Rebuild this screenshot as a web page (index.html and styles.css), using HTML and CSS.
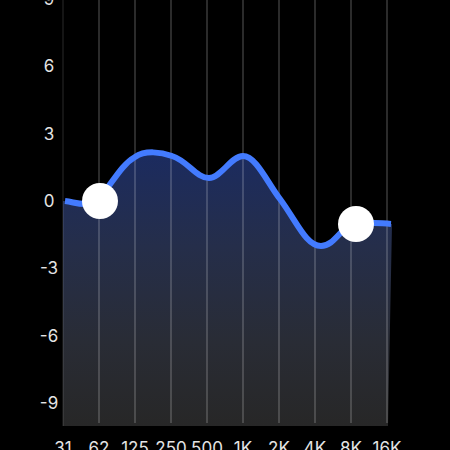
FILE: index.html
```html
<!DOCTYPE html>
<html lang="en">
<head>
    <meta charset="UTF-8">
    <meta name="viewport" content="width=device-width, initial-scale=1.0">
    <title>Equalizer</title>
    <link rel="stylesheet" href="styles.css">
</head>
<body>
    <main class="equalizer">
        <div class="chart">
            <!-- Gain in dB -->
            <div class="gain-axis">
                <span>9</span>
                <span>6</span>
                <span>3</span>
                <span>0</span>
                <span>-3</span>
                <span>-6</span>
                <span>-9</span>
            </div>
            <div class="plot">
                <svg class="curve" viewBox="0 0 324 450" preserveAspectRatio="none" aria-hidden="true">
                    <defs>
                        <linearGradient id="fill" gradientUnits="userSpaceOnUse" x1="0" y1="174" x2="0" y2="450">
                            <stop offset="0" stop-color="#1b2b60"/>
                            <stop offset="0.35" stop-color="#252e4a"/>
                            <stop offset="0.7" stop-color="#292c35"/>
                            <stop offset="1" stop-color="#272727"/>
                        </linearGradient>
                    </defs>
                    <path fill="url(#fill)" d="M0 225 L2 225 C10 226 14 228 22 228 C42 228 51 193 72 181 C82 174 98 176 109 180 C125 185 133 202 146 202 C158 202 168 180 180 180 C193 180 204 206 217 223 C234 246 243 270 258 270 C273 270 279 247 295 247 C307 246 313 247 329 248 L325 450 L0 450 Z"/>
                    <path class="grid-line edge" d="M0 0V450"/>
                    <path class="grid-line" d="M36 0V447 M72 0V447 M108 0V447 M144 0V447 M180 0V447 M216 0V447 M252 0V447 M288 0V447 M324 0V447"/>
                    <path class="response" d="M2 225 C10 226 14 228 22 228 C42 228 51 193 72 181 C82 174 98 176 109 180 C125 185 133 202 146 202 C158 202 168 180 180 180 C193 180 204 206 217 223 C234 246 243 270 258 270 C273 270 279 247 295 247 C307 246 313 247 328 248"/>
                </svg>
                <input class="knob low" type="range" min="-10" max="10" value="0" aria-label="Low band gain">
                <input class="knob high" type="range" min="-10" max="10" value="-1" aria-label="High band gain">
            </div>
        </div>
        <!-- Frequency in Hz -->
        <div class="frequency-axis">
            <span>31</span>
            <span>62</span>
            <span>125</span>
            <span>250</span>
            <span>500</span>
            <span>1K</span>
            <span>2K</span>
            <span>4K</span>
            <span>8K</span>
            <span>16K</span>
        </div>
    </main>
</body>
</html>
```

FILE: styles.css
```css
body {
    margin: 0;
    background-color: #000;
    color: #e4e4e4;
    font-family: Inter, "Liberation Sans", sans-serif;
    font-size: 17px;
    line-height: 20px;
    overflow: hidden;
}
.equalizer {
    margin-top: -35px;
}
.chart {
    display: flex;
    align-items: center;
    height: 472px;
    padding: 0 14%;
}
.gain-axis {
    display: grid;
    grid-auto-rows: 1fr;
    align-items: center;
    height: 100%;
    width: 28px;
    margin-left: -28px;
    text-align: center;
}
.plot {
    position: relative;
    flex: 1;
    height: 450px;
}
.curve {
    display: block;
    width: 100%;
    height: 100%;
    overflow: visible;
}
.grid-line {
    fill: none;
    stroke: rgba(255, 255, 255, 0.17);
    stroke-width: 2;
}
.grid-line.edge {
    stroke-width: 1;
}
.response {
    fill: none;
    stroke: #437bff;
    stroke-width: 6;
}
/* Vertical sliders over the curve, only their thumbs are visible */
.knob {
    position: absolute;
    top: -18px;
    width: 36px;
    height: 486px;
    margin: 0 0 0 -18px;
    appearance: none;
    background: none;
    writing-mode: vertical-lr;
    direction: rtl;
}
.knob.low {
    left: calc(100% / 9 + 1px);
}
.knob.high {
    left: calc(90% + 1px);
}
.knob::-webkit-slider-thumb {
    appearance: none;
    width: 36px;
    height: 36px;
    border: none;
    border-radius: 50%;
    background-color: #fff;
    cursor: grab;
}
.knob::-moz-range-thumb {
    width: 36px;
    height: 36px;
    border: none;
    border-radius: 50%;
    background-color: #fff;
    cursor: grab;
}
.frequency-axis {
    display: grid;
    grid-template-columns: repeat(10, 1fr);
    margin: 1px 10% 0;
    text-align: center;
}
```
